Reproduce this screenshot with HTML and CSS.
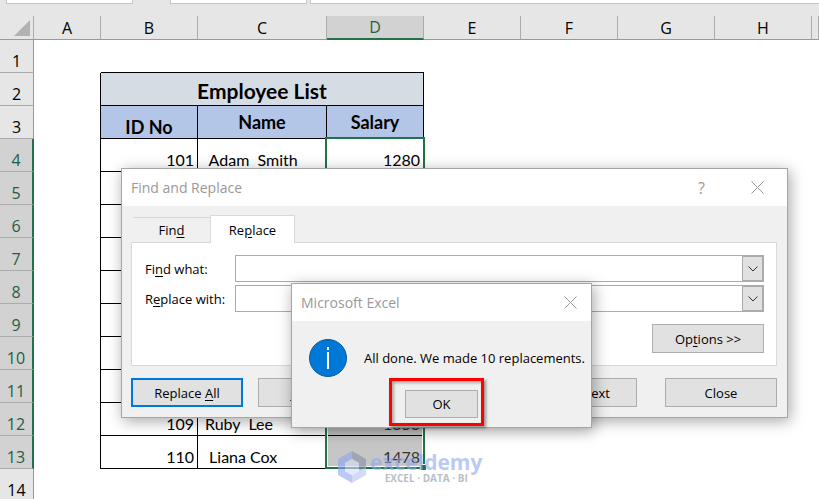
FILE: index.html
```
<!DOCTYPE html>
<html lang="en">
<head>
    <meta charset="UTF-8">
    <meta name="viewport" content="width=device-width, initial-scale=1.0">
    <title>Employee List</title>
    <link rel="stylesheet" href="styles.css">
</head>
<body>
    <div class="formula-bar">
        <div class="bar-box name-box"></div>
        <div class="bar-box tools-box"></div>
        <div class="bar-box formula-box"></div>
    </div>
    <table class="sheet">
        <colgroup>
            <col class="col-head"><col class="col-a"><col class="col-std"><col class="col-name"><col class="col-std">
            <col class="col-std"><col class="col-std"><col class="col-std"><col class="col-std"><col>
        </colgroup>
        <thead>
            <tr>
                <th class="corner"><svg width="16" height="16" viewBox="0 0 16 16"><path d="M16 0V16H0Z" fill="#b2b2b2"/></svg></th>
                <th>A</th><th>B</th><th>C</th><th class="active">D</th><th>E</th><th>F</th><th>G</th><th>H</th><th></th>
            </tr>
        </thead>
        <tbody>
            <tr class="before"><th>1</th><td></td><td></td><td></td><td></td></tr>
            <tr class="data"><th>2</th><td></td><td colspan="3" class="title">Employee List</td></tr>
            <tr class="data heads"><th>3</th><td></td><td class="low">ID No</td><td>Name</td><td>Salary</td></tr>
            <tr class="data sel"><th>4</th><td></td><td>101</td><td> Adam  Smith</td><td class="first">1280<div class="selection"></div></td></tr>
            <tr class="data sel"><th>5</th><td></td><td></td><td></td><td></td></tr>
            <tr class="data sel"><th>6</th><td></td><td></td><td></td><td></td></tr>
            <tr class="data sel"><th>7</th><td></td><td></td><td></td><td></td></tr>
            <tr class="data sel"><th>8</th><td></td><td></td><td></td><td></td></tr>
            <tr class="data sel"><th>9</th><td></td><td></td><td></td><td></td></tr>
            <tr class="data sel"><th>10</th><td></td><td></td><td></td><td></td></tr>
            <tr class="data sel"><th>11</th><td></td><td></td><td></td><td></td></tr>
            <tr class="data sel"><th>12</th><td></td><td>109</td><td>Ruby  Lee</td><td>1350</td></tr>
            <tr class="data sel"><th>13</th><td></td><td>110</td><td> Liana Cox</td><td>1478</td></tr>
            <tr><th>14</th><td></td><td></td><td></td><td></td></tr>
        </tbody>
    </table>

    <div class="watermark">
        <svg width="28" height="32" viewBox="0 0 28 32">
            <path d="M0 8L14 0V8L7 12V20L14 24V32L0 24Z" fill="#8fa8ee"/>
            <path d="M14 0L28 8V23L21 19V12L14 8Z" fill="#8490a8"/>
            <path d="M14 24L28 16V24L14 32Z" fill="#b4c4f5"/>
            <path d="M7 12L14 8L21 12V20L14 24L7 20Z" fill="#d5def8"/>
        </svg>
        <div class="brand">
            <div class="brand-name">exceldemy</div>
            <div class="brand-tag">EXCEL · DATA · BI</div>
        </div>
    </div>

    <div class="dialog find-dialog">
        <div class="dialog-title">
            <span>Find and Replace</span>
            <button class="icon-btn help">?</button>
            <button class="icon-btn" aria-label="Close dialog"><svg width="13" height="13" viewBox="0 0 13 13"><path d="M.5 .5L12.5 12.5M12.5 .5L.5 12.5"/></svg></button>
        </div>
        <div class="find-body">
            <div class="tabs">
                <button class="tab">Fin<u>d</u></button>
                <button class="tab current">Re<u>p</u>lace</button>
            </div>
            <div class="panel">
                <div class="field">
                    <label for="findWhat">Fi<u>n</u>d what:</label>
                    <div class="combo">
                        <input type="text" id="findWhat">
                        <button aria-label="Find history"><svg width="10" height="6" viewBox="0 0 10 6"><path d="M.5 .5L5 5L9.5 .5"/></svg></button>
                    </div>
                </div>
                <div class="field">
                    <label for="replaceWith">R<u>e</u>place with:</label>
                    <div class="combo">
                        <input type="text" id="replaceWith">
                        <button aria-label="Replace history"><svg width="10" height="6" viewBox="0 0 10 6"><path d="M.5 .5L5 5L9.5 .5"/></svg></button>
                    </div>
                </div>
                <button class="btn options">Op<u>t</u>ions &gt;&gt;</button>
            </div>
            <div class="actions">
                <div class="pair">
                    <button class="btn default">Replace <u>A</u>ll</button>
                    <button class="btn"><u>R</u>eplace</button>
                </div>
                <div class="pair">
                    <button class="btn">F<u>i</u>nd All</button>
                    <button class="btn"><u>F</u>ind Next</button>
                </div>
                <button class="btn">Close</button>
            </div>
        </div>
    </div>

    <div class="dialog message-dialog">
        <div class="dialog-title">
            <span>Microsoft Excel</span>
            <button class="icon-btn" aria-label="Close message"><svg width="13" height="13" viewBox="0 0 13 13"><path d="M.5 .5L12.5 12.5M12.5 .5L.5 12.5"/></svg></button>
        </div>
        <div class="message">
            <svg width="38" height="38" viewBox="0 0 38 38">
                <circle cx="19" cy="19" r="18.5" fill="#0078d7" stroke="#0a5a9c"/>
                <path d="M18 8h2v3h-2zM18 13h2v17h-2z" fill="#fff"/>
            </svg>
            <p>All done. We made 10 replacements.</p>
        </div>
        <div class="message-actions">
            <div class="highlight"><button class="btn ok">OK</button></div>
        </div>
    </div>
</body>
</html>
```
FILE: styles.css
```
* {
    box-sizing: border-box;
}
body {
    margin: 0;
    height: 100vh;
    overflow: hidden;
    position: relative;
    background: #fff;
    color: #000;
    font-family: "Open Sans", "Noto Sans", sans-serif;
    font-size: 13px;
}
button, input {
    font: inherit;
    color: inherit;
    margin: 0;
    padding: 0;
}
u {
    text-underline-offset: 2px;
}

/* formula bar */
.formula-bar {
    display: flex;
    height: 16px;
    padding-left: 6px;
    background: #e6e6e6;
}
.bar-box {
    height: 4px;
    background: #fff;
    border: 1px solid #c6c6c6;
    border-top: none;
}
.name-box {
    width: 127px;
    margin-right: 37px;
}
.tools-box {
    width: 137px;
    margin-right: 3px;
}
.formula-box {
    flex: 1;
    border-right: none;
}

/* worksheet */
.sheet {
    width: 100%;
    table-layout: fixed;
    border-collapse: separate;
    border-spacing: 0;
}
.col-head { width: 34px; }
.col-a { width: 67px; }
.col-std { width: 97px; }
.col-name { width: 129px; }
.sheet th, .sheet td {
    padding: 0;
    white-space: pre;
}
.sheet th {
    background: #e6e6e6;
    font-size: 16px;
    font-weight: 400;
    line-height: 22px;
}
.sheet thead th {
    height: 24px;
    border-bottom: 1px solid #999;
    border-right: 1px solid #ababab;
    vertical-align: middle;
}
.sheet thead th.active {
    background: #d2d2d2;
    color: #1f5f43;
    border-bottom: 2px solid #217346;
}
.sheet thead th.corner {
    text-align: right;
    padding: 0 3px 0 0;
    line-height: 0;
}
.sheet tbody th {
    height: 33px;
    border-right: 1px solid #999;
    border-bottom: 1px solid #ababab;
    vertical-align: bottom;
}
.sheet td {
    font-family: Lato, sans-serif;
    font-size: 16px;
    line-height: 22px;
    vertical-align: bottom;
}
.sheet .sel th {
    background: #d2d2d2;
    color: #1f5f43;
    border-right: 2px solid #217346;
}
.before td:nth-child(n+3) {
    border-bottom: 1px solid #000;
}
.data td {
    border-right: 1px solid #000;
    border-bottom: 1px solid #000;
}
.data td:nth-child(2) {
    border-bottom: none;
}
.sheet .title {
    background: #d6dce4;
    font-size: 21px;
    font-weight: 700;
    line-height: 28px;
    text-align: center;
}
.heads td {
    font-size: 18px;
    font-weight: 700;
    text-align: center;
    vertical-align: middle;
}
.heads td:nth-child(n+3) {
    background: #b4c6e7;
}
.sheet .heads .low {
    vertical-align: bottom;
}
.sel td:nth-child(3), .sel td:nth-child(5) {
    text-align: right;
    padding-right: 3px;
}
.sel td:nth-child(4) {
    padding-left: 7px;
}
.sel td:nth-child(5) {
    background: #c6c6c6;
    color: #333;
}
.sheet .sel .first {
    position: relative;
    background: #fff;
    color: #000;
}
/* outline over the ten selected salary cells */
.selection {
    position: absolute;
    top: -2px;
    left: -2px;
    right: -2px;
    height: calc(1000% + 12px);
    border: 2px solid #217346;
    box-shadow: inset 0 0 0 1px #fff;
}
.selection::after {
    content: "";
    position: absolute;
    right: -3px;
    bottom: -3px;
    width: 5px;
    height: 5px;
    background: #217346;
    outline: 1px solid #fff;
}

/* watermark */
.watermark {
    position: absolute;
    top: 451px;
    left: 338px;
    display: flex;
    gap: 4px;
    opacity: 0.6;
}
.brand {
    text-align: center;
    font-weight: 700;
}
.brand-name {
    color: #8fa8ee;
    font-size: 21px;
    line-height: 23px;
}
.brand-tag {
    color: #8a94a5;
    font-size: 10px;
    line-height: 8px;
}

/* dialogs */
.dialog {
    position: absolute;
    background: #f0f0f0;
    border: 1px solid #a6a6a6;
    box-shadow: 2px 3px 14px rgba(0, 0, 0, 0.35);
}
.dialog-title {
    display: flex;
    align-items: center;
    height: 37px;
    padding: 0 23px 0 9px;
    background: #fff;
    color: #999;
    font-size: 14px;
}
.dialog-title span {
    flex: 1;
}
.icon-btn {
    border: none;
    background: none;
    line-height: 0;
}
.icon-btn svg {
    fill: none;
    stroke: #999;
}
.help {
    margin-right: 46px;
    font-size: 16px;
}
.find-dialog {
    top: 168px;
    left: 121px;
    width: 667px;
}
.find-body {
    padding: 9px 10px 10px 9px;
}
.tabs {
    display: flex;
    align-items: flex-end;
    padding-left: 2px;
}
.tab {
    width: 77px;
    height: 25px;
    border: none;
    border-top: 1px solid #d9d9d9;
    background: #f0f0f0;
}
.tab.current {
    width: 85px;
    height: 28px;
    margin-bottom: -1px;
    border: 1px solid #d9d9d9;
    border-bottom: none;
    background: #fff;
    z-index: 1;
}
.panel {
    display: flex;
    flex-direction: column;
    gap: 3px;
    padding: 12px 12px 12px 13px;
    border: 1px solid #d9d9d9;
    background: #fff;
}
.field {
    display: flex;
    align-items: center;
}
.field label {
    width: 90px;
}
.combo {
    display: flex;
    flex: 1;
    height: 27px;
    border: 1px solid #ababab;
}
.combo input {
    flex: 1;
    min-width: 0;
    border: none;
    background: #fff;
}
.combo button {
    width: 21px;
    border: 1px solid #ababab;
    background: #e1e1e1;
    line-height: 0;
}
.combo svg {
    fill: none;
    stroke: #333;
}
.btn {
    width: 112px;
    height: 29px;
    border: 1px solid #adadad;
    background: #e1e1e1;
}
.options {
    align-self: flex-end;
    margin-top: 9px;
}
.actions {
    display: flex;
    justify-content: space-between;
    margin-top: 12px;
}
.pair {
    display: flex;
    gap: 15px;
}
.default {
    border: 2px solid #0078d7;
}
.message-dialog {
    top: 283px;
    left: 291px;
    width: 301px;
}
.message-dialog .dialog-title {
    padding-right: 14px;
}
.message {
    display: flex;
    align-items: center;
    gap: 17px;
    padding: 18px 0 0 17px;
}
.message p {
    margin: 0;
    white-space: nowrap;
}
.message-actions {
    display: flex;
    justify-content: center;
    padding: 1px 10px 1px 0;
}
.highlight {
    padding: 9px 3px 5px 13px;
    border: 3px solid #f00;
    box-shadow: 2px 2px 3px rgba(0, 0, 0, 0.4), inset 2px 2px 3px rgba(0, 0, 0, 0.3);
}
.ok {
    display: block;
    width: 73px;
    height: 28px;
}
```
